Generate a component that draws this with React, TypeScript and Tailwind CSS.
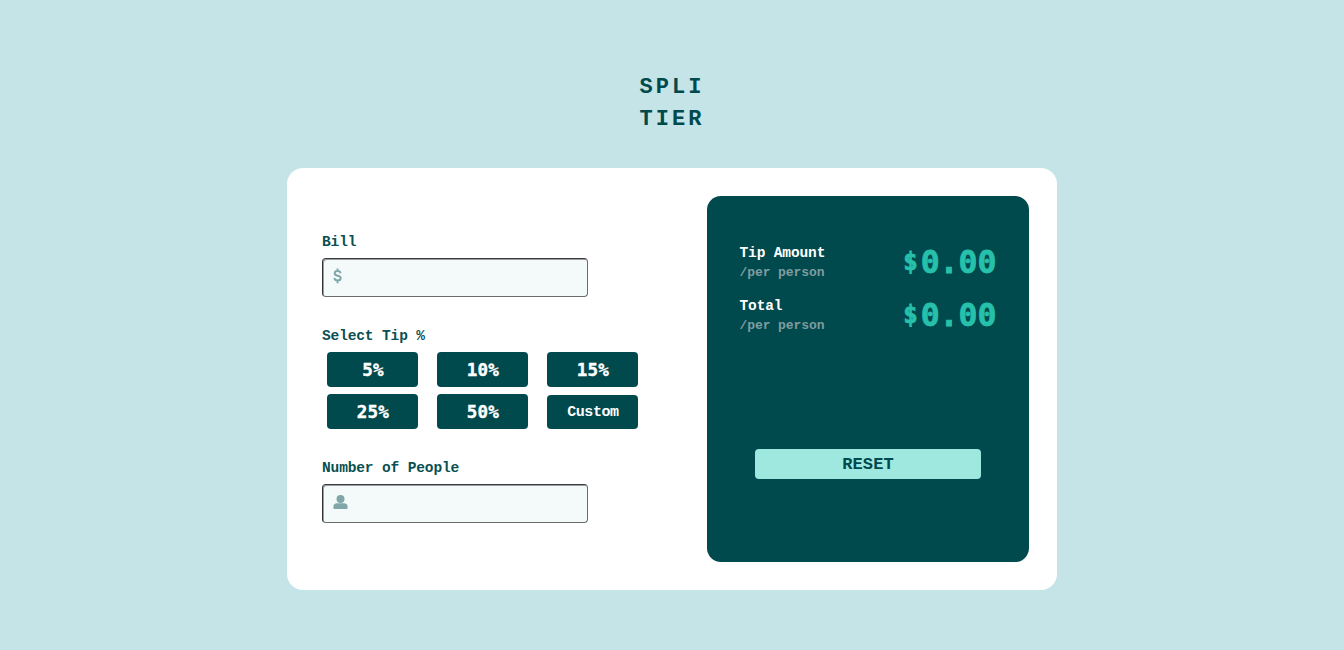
import React from "react";

function Label({ children }: { children: React.ReactNode }) {
  return (
    <label className="block h-[21px] whitespace-pre pt-[1px] text-[14.5px] leading-[20px] tracking-[-0.13px] text-[#0b4f53]">
      {children}
    </label>
  );
}

function Field({ icon }: { icon: React.ReactNode }) {
  return (
    <div className="flex h-[39px] w-[266px] rounded-[4px] border border-t-[#3a3a40] border-r-[#6b6b6b] border-b-[#6b6b6b] border-l-[#303035] bg-[#f4fafa] pt-[9px] pl-[10px] shadow-[inset_1px_1px_0_#9a9ea0]">
      {icon}
    </div>
  );
}

function DollarIcon() {
  return (
    <svg width="10" height="16" viewBox="0 0 11 16" preserveAspectRatio="none" fill="none" stroke="#7fa7a9" strokeWidth="2.1">
      <path d="M5 0.5v2.5M5 12.5v2.7M8.4 5.2C8 3.7 6.7 3 5 3 3.2 3 1.8 3.8 1.8 5.3c0 3.4 6.7 1.4 6.7 4.8 0 1.6-1.5 2.5-3.4 2.5-2 0-3.3-.9-3.7-2.5" />
    </svg>
  );
}

function PersonIcon() {
  return (
    <svg width="15" height="16" viewBox="0 0 15 16" fill="#7fa7a9">
      <circle cx="7.5" cy="4.9" r="4" />
      <path d="M4 9.3h7a3.6 3.6 0 0 1 3.6 3.6v1.1a1 1 0 0 1-1 1H1.4a1 1 0 0 1-1-1v-1.1A3.6 3.6 0 0 1 4 9.3Z" />
    </svg>
  );
}

function Result({ title }: { title: string }) {
  return (
    <div className="flex h-[53px] justify-between">
      <div>
        <div className="h-[20px] text-[14.5px] leading-[20px] tracking-[-0.13px] text-white">{title}</div>
        <div className="h-[18px] pt-[1px] text-[13px] leading-[18px] tracking-[-0.08px] text-[#7f9c9f]">/per person</div>
      </div>
      <div className="flex h-[38px] items-center font-['DejaVu_Sans_Mono',monospace] text-[31.5px] leading-[38px] text-[#26c0ab] [-webkit-text-stroke:0.8px_#26c0ab]">
        <span className="w-[17.5px] text-[24px] leading-[38px]">$</span>
        <span>0.00</span>
      </div>
    </div>
  );
}

const tips = ["5%", "10%", "15%", "25%", "50%"];

export default function App() {
  return (
    <main className="flex h-[650px] w-full flex-col items-center bg-[#c5e4e7] pt-[72px] font-['Liberation_Mono',monospace] font-bold">
      <h1 className="h-[96px] text-[22px] leading-[31.5px] tracking-[3.1px] text-[#00494d]">
        SPLI
        <br />
        TIER
      </h1>
      <section className="flex h-[422px] w-[770px] justify-between rounded-[16px] bg-white py-[28px] pr-[28px] pl-[35px]">
        <form className="flex flex-col pt-[35px]">
          <Label>Bill</Label>
          <div className="h-[6px]" />
          <Field icon={<DollarIcon />} />
          <div className="h-[28px]" />
          <Label>Select Tip %</Label>
          <div className="mt-[6px] ml-[5.4px] grid grid-cols-[91px_91px_91px] gap-x-[19px] gap-y-[7px]">
            {tips.map((tip) => (
              <button
                key={tip}
                type="button"
                className="h-[35px] rounded-[4px] bg-[#00494d] pt-[1px] font-['DejaVu_Sans_Mono',monospace] text-[17.5px] leading-[34px] tracking-[0.2px] text-white [-webkit-text-stroke:0.4px_white]"
              >
                {tip}
              </button>
            ))}
            <button
              type="button"
              className="mt-[1px] h-[34px] rounded-[4px] bg-[#00494d] pt-[1px] text-[15px] leading-[33px] tracking-[-0.43px] text-white"
            >
              Custom
            </button>
          </div>
          <div className="h-[28px]" />
          <Label>Number of People</Label>
          <div className="h-[6px]" />
          <Field icon={<PersonIcon />} />
        </form>
        <aside className="flex h-[366px] w-[322px] flex-col rounded-[14px] bg-[#00494d] px-[32.5px] pt-[47px]">
          <Result title="Tip Amount" />
          <Result title="Total" />
          <button
            type="button"
            className="mx-auto mt-[100px] h-[30px] w-[226px] rounded-[4px] bg-[#9fe8df] pt-[1px] text-[17px] leading-[30px] tracking-[0.1px] text-[#00494d]"
          >
            RESET
          </button>
        </aside>
      </section>
    </main>
  );
}
